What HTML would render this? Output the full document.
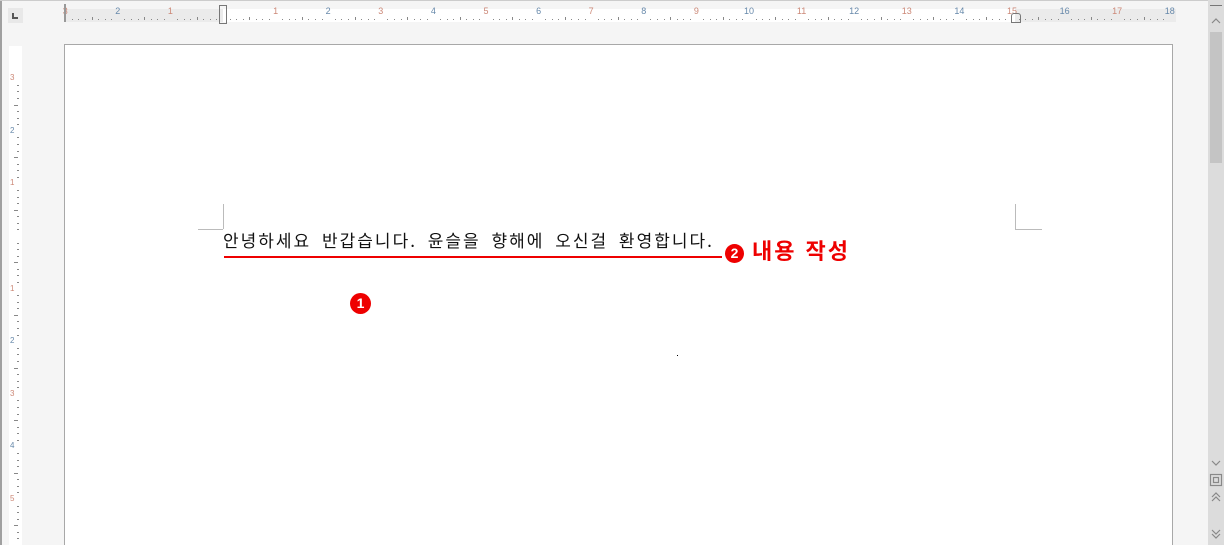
<!DOCTYPE html><html style="overflow:hidden;height:545px"><head><meta charset="utf-8"><style>
body{margin:0;width:1224px;height:545px;background:#f5f5f5;position:relative;overflow:hidden;font-family:"Liberation Sans","Noto Sans CJK KR",sans-serif}
.a{position:absolute}
</style></head><body>
<div class="a" style="left:0;top:0;width:2px;height:545px;background:#a0a0a0"></div>
<div class="a" style="left:0;top:0;width:1224px;height:1px;background:#ccc"></div>
<div class="a" style="left:8px;top:8px;width:15px;height:15px;background:#e8e8e8"></div>
<div class="a" style="left:12px;top:13px;width:2px;height:6px;background:#555"></div>
<div class="a" style="left:12px;top:17px;width:6px;height:2px;background:#555"></div>
<div id="hr" class="a" style="left:64px;top:9px;width:1112px;height:13px;background:#fff"></div>
<div id="vr" class="a" style="left:9px;top:46px;width:13px;height:499px;background:#fff"></div>
<div class="a" style="left:64px;top:44px;width:1107px;height:501px;background:#fff;border:1px solid #a8a8a8;border-bottom:none"></div>
<div class="a" style="left:223px;top:204px;width:1px;height:25px;background:#bbb"></div>
<div class="a" style="left:198px;top:229px;width:25px;height:1px;background:#bbb"></div>
<div class="a" style="left:1015px;top:204px;width:1px;height:25px;background:#bbb"></div>
<div class="a" style="left:1015px;top:229px;width:27px;height:1px;background:#bbb"></div>
<div class="a" style="left:223px;top:229px;font-size:17px;color:#111;white-space:nowrap;font-family:'Noto Sans CJK KR',sans-serif;line-height:22px;letter-spacing:2px;word-spacing:5px">안녕하세요 반갑습니다. 윤슬을 향해에 오신걸 환영합니다.</div>
<div class="a" style="left:224px;top:256px;width:498px;height:2px;background:#e00"></div>
<div class="a" style="left:725px;top:244px;width:19px;height:19px;border-radius:50%;background:#e00;color:#fff;font-weight:bold;font-size:14px;text-align:center;line-height:19px">2</div>
<div class="a" style="left:752px;top:235px;font-size:22px;font-weight:bold;color:#e00;font-family:'Noto Sans CJK KR',sans-serif;line-height:30px;white-space:nowrap;letter-spacing:2px;word-spacing:2px">내용 작성</div>
<div class="a" style="left:350px;top:293px;width:21px;height:21px;border-radius:50%;background:#e00;color:#fff;font-weight:bold;font-size:14px;text-align:center;line-height:21px">1</div>
<div class="a" style="left:677px;top:355px;width:1px;height:1px;background:#000"></div>
<div class="a" style="left:1208px;top:0;width:16px;height:545px;background:#dcdcdc"></div>
<div class="a" style="left:1210px;top:5px;width:12px;height:1px;background:#777"></div>
<div class="a" style="left:1210px;top:32px;width:12px;height:131px;background:#c4c4c4"></div>
<svg class="a" style="left:1208px;top:0" width="16" height="545" fill="none" stroke="#888" stroke-width="1.2">
<path d="M4 23 L8 19 L12 23"/>
<path d="M4 461 L8 465 L12 461"/>
<rect x="2.5" y="474.5" width="11" height="11"/><rect x="5.5" y="477.5" width="5" height="5"/>
<path d="M4 497 L8 493 L12 497 M4 501 L8 497 L12 501"/>
<path d="M4 530 L8 534 L12 530 M4 534 L8 538 L12 534"/>
</svg>
<script>
var hr=document.getElementById('hr'),h='';
h+='<div class="a" style="left:0;top:0;width:159px;height:13px;background:#ebebeb"></div><div class="a" style="left:951px;top:0;width:161px;height:13px;background:#ebebeb"></div>';
for(var i=-3;i<=18;i++){var x=159+i*52.6;if(x<0)continue;if(x>1112)break;
 if(i!=0)h+='<div class="a" style="left:'+(x-6)+'px;top:-3px;width:12px;text-align:center;font-size:9px;color:'+(i%2?'#c87':'#68a')+'">'+Math.abs(i)+'</div>';
 for(var k=1;k<8;k++){var t=x+k*6.575;if(t<1112)h+='<div class="a" style="left:'+t+'px;top:'+(k==4?8:10)+'px;width:1px;height:'+(k==4?3:1)+'px;background:#888"></div>';}}
h+='<div class="a" style="left:0;top:-5px;width:2px;height:18px;background:#999"></div>';
h+='<div class="a" style="left:155px;top:-4px;width:8px;height:19px;border:1px solid #777;box-sizing:border-box"></div>';
h+='<div class="a" style="left:947px;top:4px;width:8px;height:8px;border:1px solid #777;border-radius:3px 3px 0 0"></div>';
hr.innerHTML=h;
var vr=document.getElementById('vr'),v='';
for(var i=-3;i<=9;i++){var y=236+i*52.6-46;if(y<0||y>490)continue;
 if(i!=0)v+='<div class="a" style="left:1px;top:'+(y-5)+'px;font-size:8px;color:'+(i%2?'#c87':'#68a')+'">'+Math.abs(i)+'</div>';
 for(var k=1;k<8;k++){var ty=y+k*6.575;if(ty<497)v+='<div class="a" style="left:'+(k==4?5:8)+'px;top:'+ty+'px;width:'+(k==4?4:2)+'px;height:1px;background:#888"></div>';}}
vr.innerHTML=v;
</script>
</body></html>
